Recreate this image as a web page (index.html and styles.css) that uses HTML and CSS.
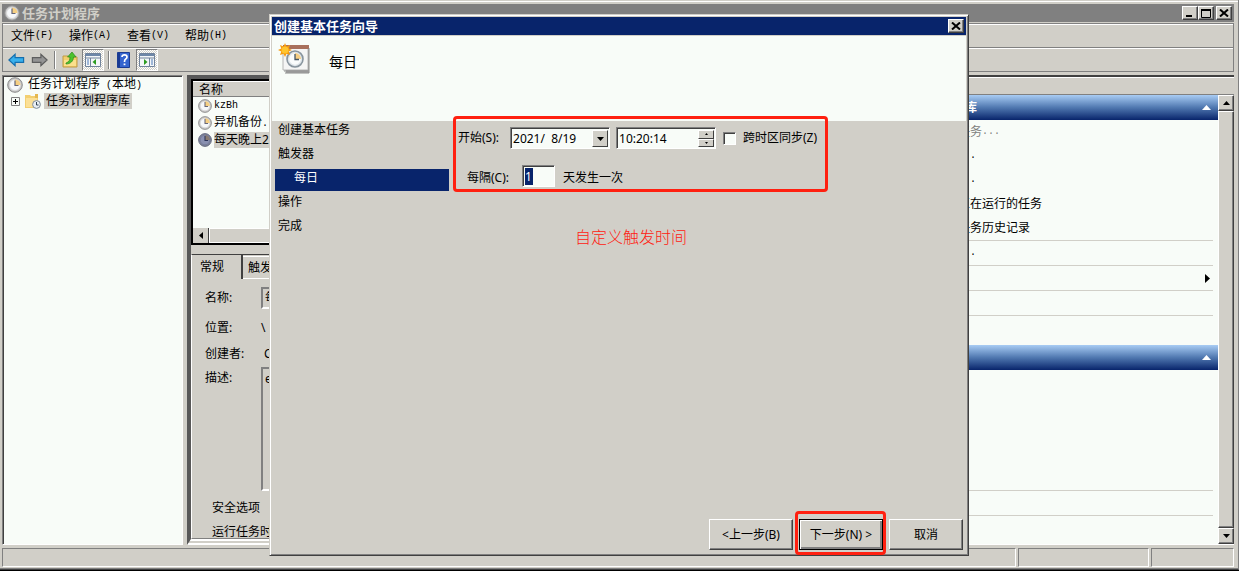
FILE: index.html
```html
<!DOCTYPE html>
<html lang="zh-CN">
<head>
<meta charset="utf-8">
<title>任务计划程序</title>
<link rel="stylesheet" href="styles.css">
</head>
<body>
<svg class="defs" aria-hidden="true">
  <symbol id="clock" viewBox="0 0 16 16">
    <circle cx="8" cy="8" r="7.3" fill="#c4c4c4" stroke="#8c8c8c" stroke-width="1"/>
    <circle cx="8" cy="8" r="5.5" fill="#f6f8fa" stroke="#d8d8d8" stroke-width="1"/>
    <path d="M8 8V2.5A5.5 5.5 0 0 1 13.5 8z" fill="#f5cf83"/>
    <path d="M8 3.5V8.5H11.5" fill="none" stroke="#667" stroke-width="1.2"/>
  </symbol>
  <symbol id="clock-picked" viewBox="0 0 16 16">
    <circle cx="8" cy="8" r="7.3" fill="#7f8499" stroke="#5c6178" stroke-width="1"/>
    <circle cx="8" cy="8" r="5.5" fill="#8990b0" stroke="#747a98" stroke-width="1"/>
    <path d="M8 8V2.5A5.5 5.5 0 0 1 13.5 8z" fill="#8a7c70"/>
    <path d="M8 3.5V8.5H11.5" fill="none" stroke="#2c3458" stroke-width="1.2"/>
  </symbol>
  <symbol id="close" viewBox="0 0 10 8"><path d="M1 .5l8 7M9 .5l-8 7" stroke="#000" stroke-width="2"/></symbol>
  <symbol id="arrow" viewBox="0 0 18 14">
    <path d="M1 7L7.500 1V4.500H16.500V9.500H7.500V13z" stroke-width="1.300"/>
  </symbol>
</svg>

<div class="window">
  <header class="titlebar">
    <svg class="i16"><use href="#clock"/></svg>
    <h1>任务计划程序</h1>
    <button class="cap" aria-label="最小化"><svg width="10" height="8"><path d="M1 6h6v2h-6z"/></svg></button>
    <button class="cap" aria-label="最大化"><svg width="10" height="9"><path d="M.5 1h9v7.500h-9z" fill="none" stroke="#000"/><path d="M0 0h10v2h-10z"/></svg></button>
    <button class="cap last" aria-label="关闭"><svg width="10" height="8"><use href="#close"/></svg></button>
  </header>

  <div class="bars">
    <nav class="menubar">
      <button>文件<span class="m">(F)</span></button>
      <button>操作<span class="m">(A)</span></button>
      <button>查看<span class="m">(V)</span></button>
      <button>帮助<span class="m">(H)</span></button>
    </nav>
    <div class="toolbar">
      <button aria-label="后退"><svg class="arr back"><use href="#arrow"/></svg></button>
      <button aria-label="前进"><svg class="arr fwd"><use href="#arrow"/></svg></button>
      <i class="vsep"></i>
      <button aria-label="向上"><svg width="16" height="16"><path d="M1 4h5l1 1h8v10H1z" fill="#f3ce6c" stroke="#c09a45"/><path d="M2 8h12v6H2z" fill="#fbe08c"/><path d="M4 11c3-1 4-3 4-6H5.500L10 0l4 5h-2.500c0 4-3 7-7.500 7z" fill="#4cc22e" stroke="#2c8a1c" stroke-width=".7"/></svg></button>
      <button class="on" aria-label="显示控制台树"><svg width="16" height="16"><path d="M.5 1.500h15v13H.5z" fill="#f4f6f8" stroke="#71839b"/><path d="M1 2h14v2H1z" fill="#6e87a8"/><path d="M1 6h14M5.500 6v8" stroke="#71839b"/><path d="M2 8h2m-2 2h2m-2 2h2" stroke="#4b78b8"/><path d="M11 7v6L7.500 10z" fill="#2c9b20"/></svg></button>
      <i class="vsep"></i>
      <button aria-label="帮助"><svg width="14" height="16"><path d="M.5.5h12v15H.5z" fill="#3565cf" stroke="#1b3c92"/><path d="M1 1h2v14H1z" fill="#183a94"/><path d="M5 5q0-2.200 2.500-2.200T10 5q0 1.300-1.300 2T7.500 10" fill="none" stroke="#fff" stroke-width="1.700"/><path d="M6.600 11.500h1.800v1.700H6.600z" fill="#fff"/></svg></button>
      <button class="on" aria-label="显示操作窗格"><svg width="16" height="16"><path d="M.5 1.500h15v13H.5z" fill="#f4f6f8" stroke="#71839b"/><path d="M1 2h14v2H1z" fill="#6e87a8"/><path d="M1 6h14M10.500 6v8" stroke="#71839b"/><path d="M12 8h2m-2 2h2m-2 2h2" stroke="#4b78b8"/><path d="M5 7v6L8.500 10z" fill="#2c9b20"/></svg></button>
    </div>
  </div>

  <main class="panes">
    <section class="tree">
      <div class="node"><svg class="i16"><use href="#clock"/></svg><span>任务计划程序<span class="m"> (</span>本地<span class="m">)</span></span></div>
      <div class="node child">
        <button class="plus" aria-label="展开"><svg width="9" height="9"><path d="M.5.5h8v8h-8z" fill="#f8fcf8" stroke="#808080"/><path d="M2 4.500h5M4.500 2v5" stroke="#000"/></svg></button>
        <svg class="i16"><path d="M0 2h5l1 1h7v12H0z" fill="#f3cf70"/><path d="M1 5h11v9H1z" fill="#fbe096"/><path d="M10 1h3v4h-3z" fill="#e5b850"/><circle cx="11.500" cy="11.500" r="3.900" fill="#e8eef4" stroke="#7e8b98"/><path d="M11.500 9v3h2" fill="none" stroke="#345"/></svg>
        <span class="sel">任务计划程序库</span>
      </div>
    </section>

    <section class="center">
      <div class="list">
        <div class="colhead">名称</div>
        <ul>
          <li><svg class="i14"><use href="#clock"/></svg><span class="m">kzBh</span></li>
          <li><svg class="i14"><use href="#clock"/></svg><span>异机备份<span class="m">...</span></span></li>
          <li><svg class="i14"><use href="#clock-picked"/></svg><span class="sel">每天晚上23点</span></li>
        </ul>
        <div class="hscroll"><button aria-label="向左滚动"><svg width="4" height="7"><path d="M4 0v7L0 3.500z"/></svg></button><i></i></div>
      </div>
      <div class="details">
        <div class="tabs"><button class="tab active">常规</button><button class="tab">触发器</button></div>
        <div class="props">
          <label for="tname">名称:</label><input id="tname" value="每天晚上23点" readonly>
          <span>位置:</span><span>\</span>
          <span>创建者:</span><span class="owner">CHINA</span>
          <label for="tdesc">描述:</label><textarea id="tdesc" readonly>exp</textarea>
        </div>
        <div class="security"><p>安全选项</p><p>运行任务时，请使用下列用户帐户:</p></div>
      </div>
    </section>

    <section class="actions">
      <div class="acthead">操作</div>
      <div class="actbody">
        <div class="actlist">
          <h2><span>任务计划程序库</span><svg width="9" height="5"><path d="M4.500 0L9 5H0z" fill="#fff"/></svg></h2>
          <ul>
            <li class="dim">创建基本任务<span class="m">...</span></li>
            <li>创建任务<span class="m">...</span></li>
            <li>导入任务<span class="m">...</span></li>
            <li>显示所有正在运行的任务</li>
            <li>禁用所有任务历史记录</li>
          </ul>
          <ul class="ruled">
            <li>新文件夹<span class="m">...</span></li>
            <li>查看<svg class="more" width="5" height="9"><path d="M0 0v9l5-4.500z"/></svg></li>
            <li>刷新</li>
            <li>帮助</li>
          </ul>
          <h2><span>所选项</span><svg width="9" height="5"><path d="M4.500 0L9 5H0z" fill="#fff"/></svg></h2>
          <ul class="ruled low"><li>删除</li><li>帮助</li></ul>
        </div>
        <div class="vscroll">
          <button aria-label="向上滚动"><svg width="7" height="4"><path d="M3.500 0L7 4H0z"/></svg></button>
          <i></i>
          <button aria-label="向下滚动"><svg width="7" height="4"><path d="M0 0h7L3.500 4z"/></svg></button>
        </div>
      </div>
    </section>
  </main>
  <footer class="status"><span></span><span></span><span></span></footer>
</div>

<div class="dialog" role="dialog" aria-label="创建基本任务向导">
  <header class="dtitle"><h2>创建基本任务向导</h2><button class="cap" aria-label="关闭"><svg width="10" height="8"><use href="#close"/></svg></button></header>
  <div class="banner">
    <svg width="32" height="32" viewBox="0 0 32 32">
      <path d="M7 5h24v25H8z" fill="#a9a9a9"/><path d="M5 3h25v24H5z" fill="#f5f5f5" stroke="#b5b5b5"/><path d="M5 2h26v4H5z" fill="#a8705c"/><path d="M6 28h24M7 30h24V5" fill="none" stroke="#8a8a8a"/>
      <circle cx="17" cy="16" r="8" fill="#dfe5ea" stroke="#88949e" stroke-width="1.600"/><circle cx="17" cy="16" r="5.800" fill="#fafcfd"/><path d="M17 16v-6a6 6 0 0 1 6 6z" fill="#f5cd83"/><path d="M17 11v5.500h4" fill="none" stroke="#456" stroke-width="1.300"/>
      <path d="M7 0l1.500 3.500L12 2l-1.200 3.500L14 7l-3.300 1.500L12 12l-3.500-1.300L7 14l-1.500-3.300L2 12l1.300-3.500L0 7l3.300-1.500L2 2l3.500 1.500z" fill="#f79a0e"/><circle cx="7" cy="7" r="3.500" fill="#ffc52e"/>
    </svg>
    <h3>每日</h3>
  </div>
  <div class="dbody">
    <ol class="steps"><li>创建基本任务</li><li>触发器</li><li class="current">每日</li><li>操作</li><li>完成</li></ol>
    <form class="form">
      <div class="row">
        <label for="date">开始(S):</label>
        <div class="field date"><input id="date" value="2021/&nbsp; 8/19"><button type="button" aria-label="选择日期"><svg width="7" height="4"><path d="M0 0h7L3.500 4z"/></svg></button></div>
        <div class="field time"><input aria-label="时间" value="10:20:14"><div class="spin"><button type="button" aria-label="增加"><svg width="3" height="2"><path d="M1.500 0L3 2H0z"/></svg></button><button type="button" aria-label="减少"><svg width="3" height="2"><path d="M0 0h3L1.500 2z"/></svg></button></div></div>
        <input type="checkbox" id="sync"><label for="sync">跨时区同步(Z)</label>
      </div>
      <div class="row second">
        <label for="days">每隔(C):</label>
        <div class="field days"><input id="days" value="1"></div>
        <span>天发生一次</span>
      </div>
      <p class="note">自定义触发时间</p>
    </form>
  </div>
  <div class="buttons">
    <button>&lt;上一步(B)</button><button class="default">下一步(N) &gt;</button><button>取消</button>
  </div>
  <i class="mark mark-form"></i>
  <i class="mark mark-next"></i>
</div>
</body>
</html>
```

FILE: styles.css
```css
:root { --face: #d1cfc8; --paper: #f8fcf8; --mid: #808080; --dark: #404040; --navy: #08246b; --red: #ff2010; }
* { box-sizing: border-box; }
body { margin: 0; height: 100vh; overflow: hidden; position: relative; background: #000; color: #000; font: 12px/16px "Noto Sans", "Noto Sans CJK SC", sans-serif; }
h1, h2, h3, p, ul, ol { margin: 0; padding: 0; font-size: 12px; list-style: none; }
button, input, textarea { font: inherit; color: inherit; margin: 0; padding: 0; border: 0; border-radius: 0; background: none; outline: 0; }
button { display: flex; align-items: center; justify-content: center; white-space: nowrap; }
svg { display: block; flex: none; }
.defs { position: absolute; width: 0; height: 0; }
.m { font-family: "Liberation Mono", monospace; font-size: 10px; }
.i16 { width: 16px; height: 16px; }
.i14 { width: 14px; height: 14px; }
.sel { background: var(--face); }

.window { height: calc(100% - 1px); display: flex; flex-direction: column; background: var(--face); padding: 4px 4px 2px 2px; border-right: 1px solid var(--mid); border-bottom: 1px solid var(--dark); box-shadow: inset 0 1px var(--face), inset 0 2px #fff, inset 0 -1px var(--mid); }
.titlebar { display: flex; align-items: center; height: 18px; background: var(--mid); color: var(--face); padding: 0 2px; flex: none; }
.titlebar h1 { margin-left: 2px; flex: 1; font-size: 13px; }
.cap { width: 16px; height: 14px; background: var(--face); border: 1px solid; border-color: #fff var(--dark) var(--dark) #fff; box-shadow: inset -1px -1px var(--mid); flex: none; }
.cap.last { margin-left: 2px; }
.bars { margin-top: 1px; border: 1px solid var(--mid); flex: none; }
.menubar, .toolbar { display: flex; align-items: center; height: 24px; border-top: 1px solid #fff; }
.menubar { padding-left: 8px; gap: 16px; border-bottom: 1px solid var(--mid); }
.toolbar { height: 23px; padding-left: 2px; gap: 1px; }
.toolbar button { width: 22px; height: 22px; }
.toolbar .on { border: 1px solid; border-color: var(--mid) #fff #fff var(--mid); background: repeating-conic-gradient(#fff 0 25%, var(--face) 0 50%) 0 0 / 2px 2px; }
.arr { width: 17px; height: 14px; }
.back { fill: #39b1ed; stroke: #166fae; }
.fwd { fill: #949494; stroke: #5e5e5e; transform: scaleX(-1); }
.vsep { width: 2px; height: 18px; margin: 0 2px 0 3px; background: var(--mid); border-right: 1px solid #fff; }

.panes { flex: 1; min-height: 0; margin-top: 3px; display: flex; gap: 4px; }
.tree { width: 181px; flex: none; background: var(--paper); border: 1px solid; border-color: var(--mid) #fff #fff var(--mid); box-shadow: inset 1px 1px var(--dark); padding: 1px 4px; }
.node { display: flex; align-items: center; height: 16px; gap: 5px; white-space: pre; }
.child { padding-left: 4px; gap: 3px; }
.child .i16 { margin-left: 2px; }
.node .sel { padding: 0 2px; }

.center { flex: 1; min-width: 0; display: flex; flex-direction: column; border: 4px solid #585858; border-color: #585858 #fff #fff #585858; border-bottom: 6px double #fff; }
.list { height: 166px; flex: none; border: 2px solid #000; background: var(--paper); display: flex; flex-direction: column; overflow: hidden; }
.colhead { height: 16px; background: var(--face); border-top: 1px solid #fff; border-bottom: 1px solid var(--mid); padding-left: 6px; }
.list ul { flex: 1; }
.list li { display: flex; align-items: center; height: 17px; gap: 2px; padding-left: 5px; white-space: nowrap; }
.hscroll { display: flex; height: 15px; background: var(--face); }
.hscroll button { width: 16px; border-right: 1px solid var(--dark); }
.hscroll i { flex: 1; border: 1px solid #fff; }
.details { flex: 1; min-height: 0; margin-top: 9px; overflow: hidden; border: 1px solid; border-color: var(--dark) var(--mid) var(--mid) #fff; }
.tabs { display: flex; height: 24px; align-items: end; }
.tab { width: 51px; height: 24px; border-right: 2px solid var(--dark); justify-content: start; padding-left: 8px; }
.tab + .tab { height: 23px; padding-left: 5px; border-top: 1px solid #fff; border-bottom: 1px solid #fff; }
.props { display: grid; grid-template-columns: 56px 1fr; grid-template-rows: 29px 24px 27px 124px; align-items: center; padding: 8px 4px 0 13px; }
.props input, .props textarea { height: 22px; border: 2px solid; border-color: var(--mid) #fff #fff var(--mid); padding-left: 2px; resize: none; min-width: 0; }
.props label, .props input { align-self: start; line-height: 22px; }
.props textarea { height: 124px; padding-top: 2px; }
.owner { padding-left: 3px; }
.security { padding: 9px 0 0 20px; display: grid; row-gap: 8px; white-space: nowrap; }

.actions { width: 341px; flex: none; display: flex; flex-direction: column; border-top: 2px solid var(--dark); border-bottom: 1px solid #fff; }
.acthead { height: 18px; flex: none; border-top: 1px solid #fff; border-bottom: 1px solid var(--mid); }
.actbody { flex: 1; min-height: 0; display: flex; }
.actlist { flex: 1; background: var(--paper); }
.actlist h2 { height: 25px; display: flex; align-items: center; justify-content: space-between; padding: 0 7px 0 0; color: #fff; background: linear-gradient(#a8ccf4, #5078b0 50%, #08246b); }
.actlist li { height: 24px; display: flex; align-items: center; padding-left: 17px; }
.actlist .dim { color: var(--mid); }
.ruled { margin-right: 5px; }
.actlist .ruled li { height: 25px; border-top: 1px solid var(--face); }
.more { margin: 0 3px 0 auto; }
.ruled + h2 { margin-top: 5px; }
.low { margin-top: 120px; }
.vscroll { width: 16px; display: flex; flex-direction: column; }
.vscroll button, .vscroll i { background: var(--face); border: 1px solid; border-color: #fff var(--dark) var(--dark) #fff; box-shadow: inset -1px -1px var(--mid); }
.vscroll button { height: 16px; flex: none; }
.vscroll i { flex: 1; }

.status { height: 19px; margin-top: 3px; display: grid; grid-template-columns: 1fr 131px 83px; gap: 2px; flex: none; }
.status span { border: 1px solid; border-color: var(--mid) #fff #fff var(--mid); }

.dialog { position: absolute; left: 269px; right: 270px; top: 14px; bottom: 15px; display: flex; flex-direction: column; background: var(--face); padding: 1px; border: 1px solid; border-color: var(--face) var(--dark) var(--dark) var(--face); box-shadow: inset 1px 1px #fff, inset -1px -1px var(--mid); }
.dtitle { display: flex; align-items: center; height: 18px; margin: 1px; padding: 0 2px; background: var(--navy); color: #fff; flex: none; }
.dtitle h2 { flex: 1; font-size: 13px; }
.banner { height: 85px; flex: none; margin: 0 1px; padding: 7px 6px; background: var(--paper); display: flex; gap: 19px; }
.banner h3 { font-size: 14px; font-weight: 400; line-height: 20px; padding-top: 9px; }
.dbody { flex: 1; display: flex; padding-left: 4px; }
.steps { width: 174px; }
.steps li { height: 22px; margin-bottom: 2px; padding: 0 3px; line-height: 18px; }
.steps .current { background: var(--navy); color: #fff; padding-left: 19px; }
.form { padding: 6px 0 0 9px; }
.row { display: flex; align-items: center; height: 22px; white-space: nowrap; }
.field { display: flex; height: 22px; background: var(--paper); border: 1px solid; border-color: var(--mid) #fff #fff var(--mid); box-shadow: inset 1px 1px var(--dark); padding: 2px 1px 1px 2px; }
.field input { flex: 1; min-width: 0; width: 0; }
.date { width: 100px; margin: 0 6px 0 11px; }
.date button { width: 16px; background: var(--face); border: 1px solid; border-color: #fff var(--dark) var(--dark) #fff; }
.time { width: 100px; }
.spin { width: 16px; display: grid; grid-template-rows: 1fr 1fr; }
.spin button { background: var(--face); border: 1px solid; border-color: #fff var(--dark) var(--dark) #fff; }
#sync { appearance: none; width: 13px; height: 13px; margin: 0 7px; background: var(--paper); border: 1px solid; border-color: var(--mid) #fff #fff var(--mid); box-shadow: inset 1px 1px var(--dark); }
.second { margin-top: 16px; padding-left: 9px; }
.second label, .second span { padding-top: 4px; }
.days { width: 33px; margin: 0 8px 0 13px; }
.days input { flex: none; width: 8px; background: var(--navy); color: #fff; }
.note { margin: 38px 0 0 117px; font-size: 16px; line-height: 24px; color: var(--red); font-weight: 300; }
.buttons { display: flex; justify-content: end; gap: 6px; padding: 0 4px 4px; flex: none; }
.buttons button { width: 84px; height: 31px; background: var(--face); border: 1px solid; border-color: #fff var(--dark) var(--dark) #fff; box-shadow: inset -1px -1px var(--mid); }
.buttons button:last-child { width: 74px; }
.buttons .default { border-color: #000; box-shadow: inset 1px 1px #fff, inset -2px -2px var(--mid); }
.mark { position: absolute; border: 3px solid var(--red); border-radius: 4px; pointer-events: none; }
.mark-form { left: 183px; top: 101px; width: 375px; height: 76px; }
.mark-next { right: 82px; bottom: 0; width: 91px; height: 44px; }
```
